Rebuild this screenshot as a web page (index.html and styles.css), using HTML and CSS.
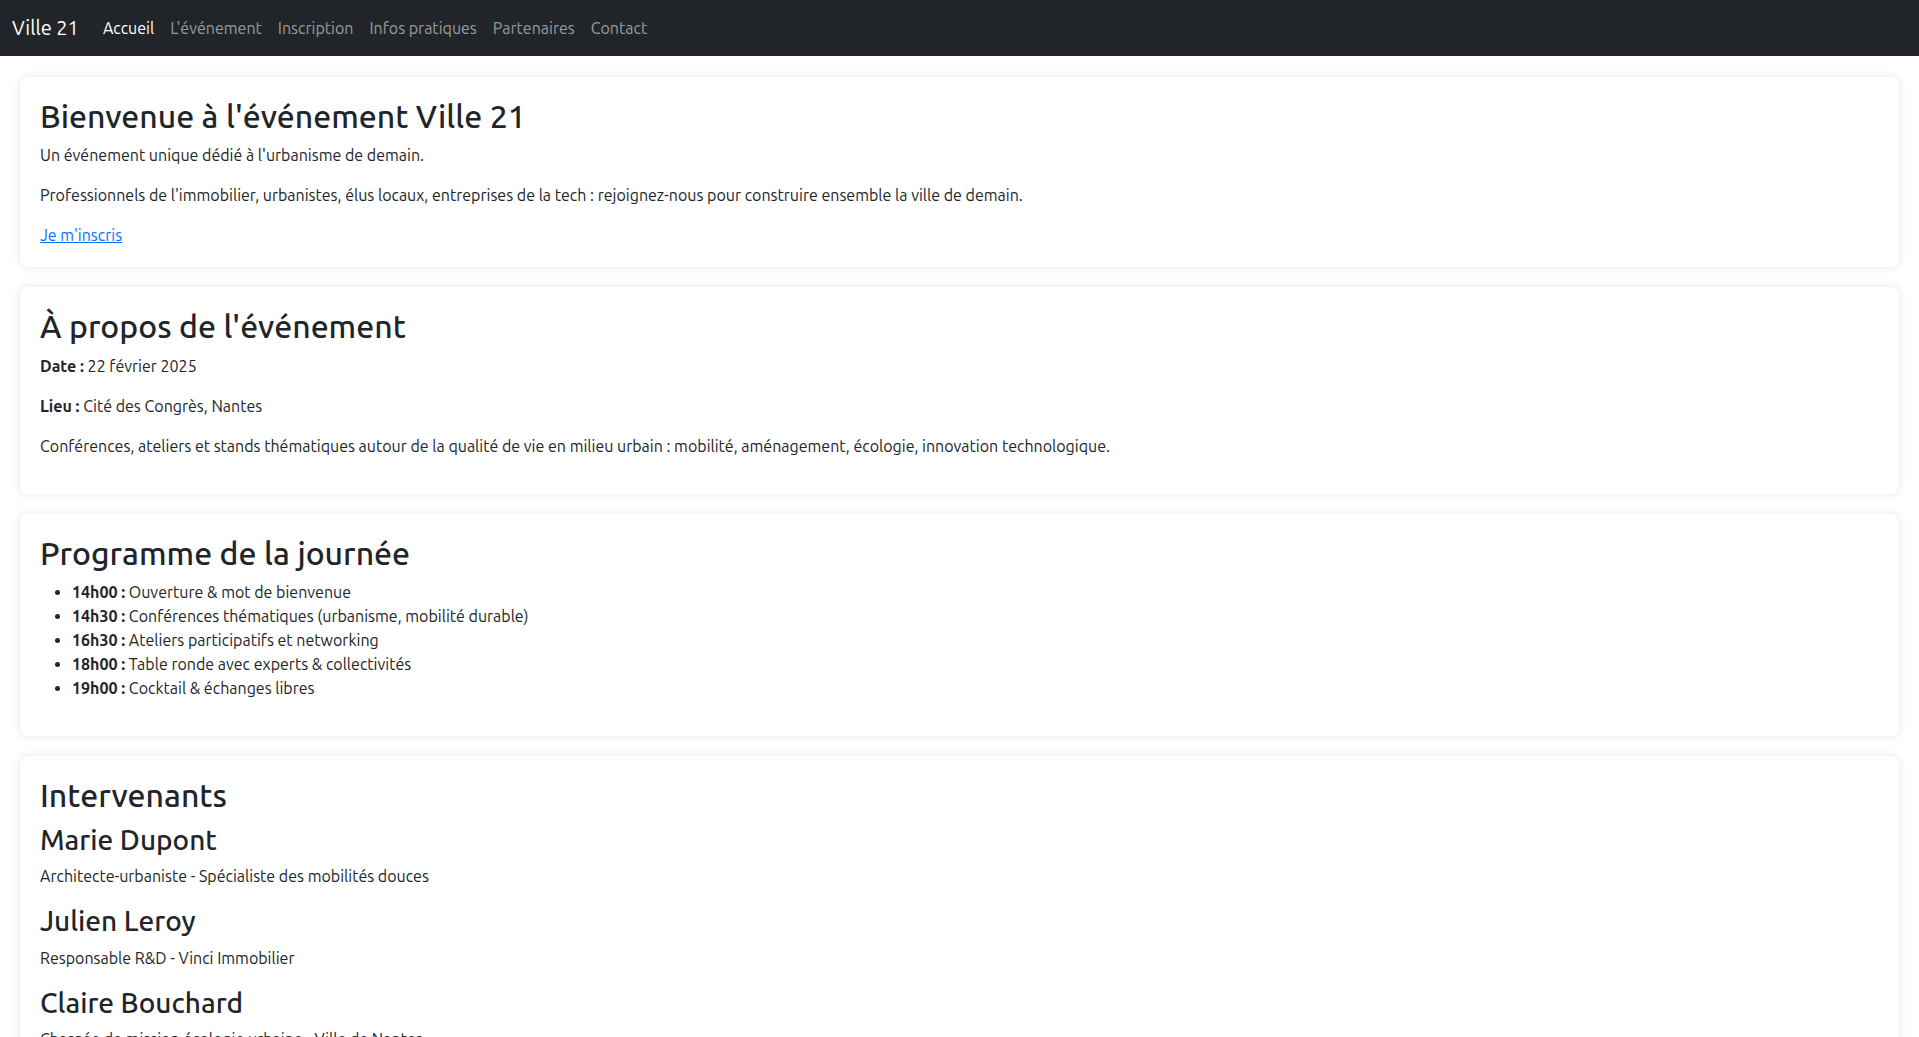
FILE: index.html
```html
<!DOCTYPE html>
<html lang="fr">
<head>
<meta charset="utf-8">
<title>Ville 21</title>
<link rel="stylesheet" href="styles.css">
</head>
<body>
<nav class="navbar">
  <div class="nav-inner">
    <a class="brand" href="#">Ville 21</a>
    <ul class="nav-links">
      <li><a class="nav-link active" href="#">Accueil</a></li>
      <li><a class="nav-link" href="#">L'événement</a></li>
      <li><a class="nav-link" href="#">Inscription</a></li>
      <li><a class="nav-link" href="#">Infos pratiques</a></li>
      <li><a class="nav-link" href="#">Partenaires</a></li>
      <li><a class="nav-link" href="#">Contact</a></li>
    </ul>
  </div>
</nav>

<main class="content">
<section class="card">
  <h2>Bienvenue à l'événement Ville 21</h2>
  <p>Un événement unique dédié à l'urbanisme de demain.</p>
  <p>Professionnels de l'immobilier, urbanistes, élus locaux, entreprises de la tech : rejoignez-nous pour construire ensemble la ville de demain.</p>
  <a class="link" href="#">Je m'inscris</a>
</section>

<section class="card">
  <h2>À propos de l'événement</h2>
  <p><strong>Date :</strong> 22 février 2025</p>
  <p><strong>Lieu :</strong> Cité des Congrès, Nantes</p>
  <p>Conférences, ateliers et stands thématiques autour de la qualité de vie en milieu urbain : mobilité, aménagement, écologie, innovation technologique.</p>
</section>

<section class="card">
  <h2>Programme de la journée</h2>
  <ul class="program">
    <li><strong>14h00 :</strong> Ouverture &amp; mot de bienvenue</li>
    <li><strong>14h30 :</strong> Conférences thématiques (urbanisme, mobilité durable)</li>
    <li><strong>16h30 :</strong> Ateliers participatifs et networking</li>
    <li><strong>18h00 :</strong> Table ronde avec experts &amp; collectivités</li>
    <li><strong>19h00 :</strong> Cocktail &amp; échanges libres</li>
  </ul>
</section>

<section class="card">
  <h2>Intervenants</h2>
  <div class="speaker">
    <h3>Marie Dupont</h3>
    <p>Architecte-urbaniste - Spécialiste des mobilités douces</p>
  </div>
  <div class="speaker">
    <h3>Julien Leroy</h3>
    <p>Responsable R&amp;D - Vinci Immobilier</p>
  </div>
  <div class="speaker">
    <h3>Claire Bouchard</h3>
    <p>Chargée de mission écologie urbaine - Ville de Nantes</p>
  </div>
</section>
</main>
</body>
</html>
```
FILE: styles.css
```css
* { box-sizing: border-box; }

body {
  margin: 0;
  font-family: "Ubuntu", "Lato", sans-serif;
  font-size: 16px;
  line-height: 1.5;
  color: #212529;
  background: #fff;
}

.navbar {
  background: #212529;
  height: 56px;
  display: flex;
  align-items: center;
}

.nav-inner {
  display: flex;
  align-items: center;
  padding: 0 12px;
}

.brand {
  color: #fff;
  font-size: 20px;
  text-decoration: none;
  margin-right: 16px;
  line-height: 30px;
}

.nav-links {
  list-style: none;
  display: flex;
  margin: 0;
  padding: 0;
}

.nav-link {
  display: block;
  padding: 8px;
  color: rgba(255, 255, 255, 0.55);
  text-decoration: none;
}

.nav-link.active { color: #fff; }

.content {
  padding-top: 1px;
}

.card {
  background: #fff;
  margin: 20px;
  padding: 20px;
  border-radius: 8px;
  box-shadow: 0 0 10px rgba(0, 0, 0, 0.1);
}

h2 {
  margin: 0 0 8px;
  font-size: 32px;
  font-weight: 500;
  line-height: 1.2;
}

h3 {
  margin: 0 0 8px;
  font-size: 28px;
  font-weight: 500;
  line-height: 1.2;
}

p {
  margin: 0 0 16px;
}

strong { font-weight: bold; }

.link {
  color: #0d6efd;
  text-decoration: underline;
}

.program {
  margin: 0 0 16px;
  padding-left: 32px;
}
```
